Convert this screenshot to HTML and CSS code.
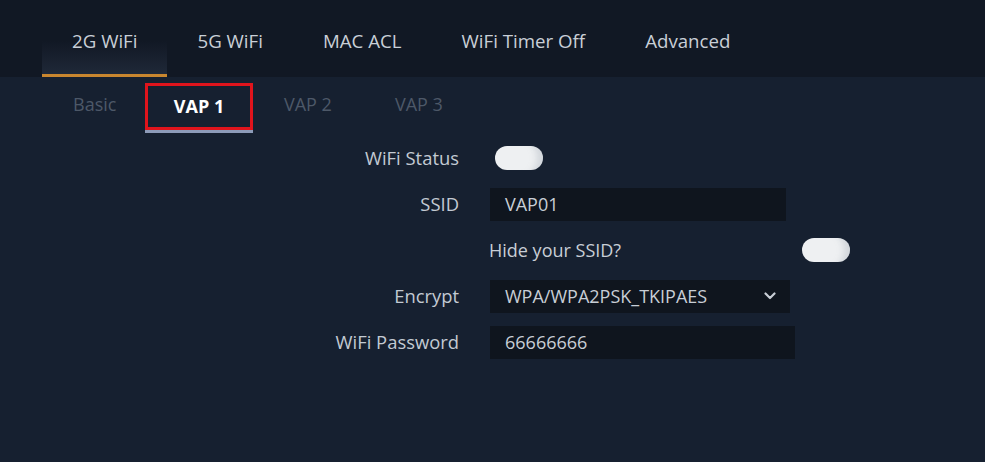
FILE: index.html
```html
<!DOCTYPE html>
<html>
<head>
<meta charset="utf-8">
<link rel="stylesheet" href="styles.css">
</head>
<body>
<div class="topbar">
  <nav class="tabs">
    <div class="tab active">2G WiFi</div>
    <div class="tab">5G WiFi</div>
    <div class="tab">MAC ACL</div>
    <div class="tab">WiFi Timer Off</div>
    <div class="tab">Advanced</div>
  </nav>
</div>
<div class="content">
  <div class="subtabs">
    <div class="subtab">Basic</div>
    <div class="subtab current">VAP 1</div>
    <div class="subtab">VAP 2</div>
    <div class="subtab">VAP 3</div>
  </div>
  <div class="form">
    <div class="row">
      <div class="label">WiFi Status</div>
      <div class="control"><span class="toggle"></span></div>
    </div>
    <div class="row">
      <div class="label">SSID</div>
      <div class="control"><div class="input">VAP01</div></div>
    </div>
    <div class="row">
      <div class="label"></div>
      <div class="control hide">
        <span class="hide-text">Hide your SSID?</span>
        <span class="toggle"></span>
      </div>
    </div>
    <div class="row">
      <div class="label">Encrypt</div>
      <div class="control">
        <div class="input select">
          <span>WPA/WPA2PSK_TKIPAES</span>
          <svg class="chev" width="12" height="8" viewBox="0 0 12 8"><path d="M1.5 1.5 L6 6 L10.5 1.5" fill="none" stroke="#c8ced6" stroke-width="2.2" stroke-linecap="round" stroke-linejoin="round"/></svg>
        </div>
      </div>
    </div>
    <div class="row">
      <div class="label">WiFi Password</div>
      <div class="control"><div class="input pw">66666666</div></div>
    </div>
  </div>
</div>
</body>
</html>
```
FILE: styles.css
```css
html, body {
  margin: 0;
  padding: 0;
}
body {
  width: 985px;
  height: 462px;
  overflow: hidden;
  background: #162030;
  font-family: "Open Sans", "Noto Sans", sans-serif;
  font-size: 18px;
  color: #c8ced6;
}
.topbar {
  height: 77px;
  background: #111824;
}
.tabs {
  display: flex;
  padding-left: 42px;
  height: 77px;
}
.tab {
  padding: 0 30px;
  height: 74px;
  line-height: 82px;
  box-sizing: border-box;
  color: #c9cfd7;
  white-space: nowrap;
  font-size: 18.7px;
}
.tab.active {
  background: linear-gradient(#111824 0, #111824 55%, #1f2838 100%);
  border-bottom: 3px solid #c8862f;
  height: 77px;
}
.content {
  background: #162030;
}
.subtabs {
  display: flex;
  padding-left: 44px;
  height: 55px;
  padding-top: 6px;
  box-sizing: border-box;
}
.subtab {
  width: 111px;
  box-sizing: border-box;
  padding-left: 29px;
  line-height: 42px;
  color: #4d5868;
}
.subtab:first-child {
  width: 101px;
}
.subtab.current {
  width: 108px;
  border: 3px solid #e0141c;
  color: #ffffff;
  font-weight: bold;
  text-align: center;
  padding-left: 0;
  margin-right: 2px;
  height: 47px;
  line-height: 41px;
  box-shadow: 0 3px 0 #8d9bb8;
}
.form {
  padding-top: 3px;
}
.row {
  display: flex;
  align-items: center;
  height: 46px;
}
.label {
  width: 459px;
  text-align: right;
  color: #c3cad3;
  flex: none;
  font-size: 18.4px;
  line-height: 24px;
}
.control {
  margin-left: 31px;
  display: flex;
  align-items: center;
}
.toggle {
  display: block;
  width: 48px;
  height: 24px;
  border-radius: 12px;
  background: #eef0f2;
  margin-left: 5px;
  box-shadow: inset -14px 0 6px -8px rgba(160,170,180,0.35);
}
.hide {
  width: 361px;
  justify-content: space-between;
  margin-left: 30px;
}
.hide .toggle {
  margin-left: 0;
}
.input {
  width: 296px;
  height: 33px;
  background: #0f151e;
  box-sizing: border-box;
  padding-left: 15px;
  line-height: 33px;
  color: #c8ced6;
  display: flex;
  align-items: center;
}
.select {
  width: 300px;
  justify-content: space-between;
  padding-right: 14px;
}
.pw {
  width: 305px;
}
.chev {
  display: block;
}
```
